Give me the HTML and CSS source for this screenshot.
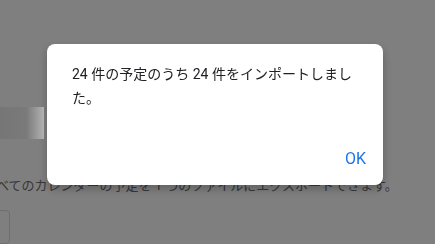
FILE: index.html
```html
<!DOCTYPE html>
<html lang="ja">
<head>
    <meta charset="UTF-8">
    <meta name="viewport" content="width=device-width, initial-scale=1.0">
    <title>インポート</title>
    <link rel="stylesheet" href="styles.css">
</head>
<body>
    <div class="page">
        <div class="import-btn"></div>
        <p class="desc">すべてのカレンダーの予定を 1 つのファイルにエクスポートできます。</p>
        <div class="field"></div>
    </div>

    <div class="scrim">
        <div class="dialog" role="alertdialog">
            <p class="message">24 件の予定のうち 24 件をインポートしました。</p>
            <div class="actions">
                <button type="button" class="ok-btn">OK</button>
            </div>
        </div>
    </div>
</body>
</html>
```

FILE: styles.css
```css
body {
    margin: 0;
    background: #fff;
    font-family: Roboto, "Noto Sans CJK JP", sans-serif;
    overflow: hidden;
}
.page {
    display: flex;
    flex-direction: column;
    align-items: flex-start;
    padding-top: 107px;
}
/* blurred button that sits on top of the scrim */
.import-btn {
    position: relative;
    z-index: 2;
    width: 44px;
    height: 32px;
    background: linear-gradient(to right, #767676 0%, #7a7a7a 60%, #b2b2b2 100%);
}
.desc {
    margin: 38px 0 0 -16px;
    font-size: 13px;
    line-height: 18px;
    color: #6f6f6f;
    white-space: nowrap;
}
.field {
    margin: 15px 0 0 -30px;
    width: 38px;
    height: 32px;
    border: 1px solid #dadce0;
    border-radius: 4px;
}
.scrim {
    position: fixed;
    inset: 0;
    z-index: 1;
    background: rgba(0, 0, 0, 0.5);
    display: flex;
    align-items: flex-start;
    padding: 44px 0 0 47px;
}
.dialog {
    width: 336px;
    height: 141px;
    background: #fff;
    border-radius: 8px;
    box-shadow: 0 4px 10px rgba(0, 0, 0, 0.25);
    display: flex;
    flex-direction: column;
}
.message {
    margin: 0;
    padding: 18px 24px 0 25px;
    font-size: 14px;
    line-height: 24px;
    color: #202124;
}
.actions {
    margin-top: auto;
    display: flex;
    justify-content: flex-end;
    padding: 0 9px 13px 0;
}
.ok-btn {
    background: none;
    border: none;
    padding: 4px 8px;
    font-family: Roboto, sans-serif;
    font-size: 16px;
    font-weight: 400;
    color: #1a73e8;
    cursor: pointer;
    border-radius: 4px;
}
```
